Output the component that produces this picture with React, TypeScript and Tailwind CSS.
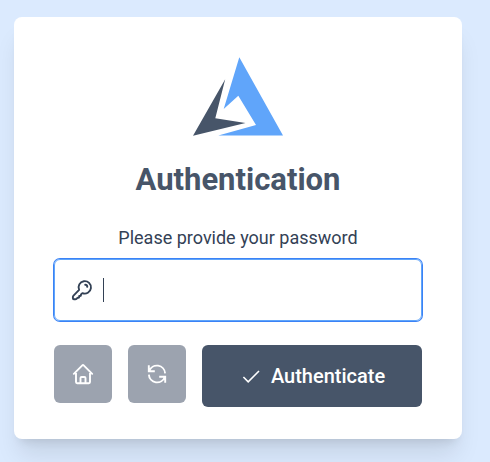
import { useState } from 'react';
import type { ReactNode } from 'react';

function Logo() {
  return (
    <svg width="90" height="80" viewBox="0 0 90 80" aria-hidden="true">
      <path fill="#60a5fa" d="M46.3 0.3 90 78.5H25.3L63 68 45.3 38.7 30.7 52Z" />
      <path fill="#475569" d="M32.2 22.3 22.3 61.2 52.5 66 0 78.7Z" />
    </svg>
  );
}

function Icon({ children }: { children: ReactNode }) {
  return (
    <svg
      width="24"
      height="24"
      viewBox="0 0 24 24"
      fill="none"
      stroke="currentColor"
      strokeWidth="1.9"
      aria-hidden="true"
      className="shrink-0"
    >
      {children}
    </svg>
  );
}

function KeyIcon() {
  return (
    <Icon>
      <path
        strokeLinejoin="round"
        d="M9.1 11.9A6.2 6.2 0 1 1 12.4 15.1L11 16.4V17.1Q11 18 10.1 18H9.2V18.9Q9.2 19.7 8.4 19.7H7.7L6.7 20.7Q6.1 21.2 5.3 21.2H3.9Q2.9 21.2 2.9 20.2V19Q2.9 18.2 3.5 17.6Z"
      />
      <path strokeLinecap="round" d="M15.2 6.8A2.2 2.2 0 0 1 17.3 8.9" />
    </Icon>
  );
}

function HomeIcon() {
  return (
    <Icon>
      <path
        strokeLinecap="round"
        strokeLinejoin="round"
        d="M2.8 11.8 11.3 3.3Q12 2.6 12.7 3.3L21.2 11.8M5 9.7V20.1Q5 21.2 6.1 21.2H17.9Q19 21.2 19 20.1V9.7M9.5 21.2V16.1Q9.5 15 10.6 15H13.4Q14.5 15 14.5 16.1V21.2"
      />
    </Icon>
  );
}

function RefreshIcon() {
  return (
    <Icon>
      <path d="M3.8 3.2V9.3H9.8M4.2 9A8.2 8.2 0 0 1 20.1 11.4M20.2 20.8V14.7H14.2M19.8 15A8.2 8.2 0 0 1 3.9 12.6" />
    </Icon>
  );
}

function CheckIcon() {
  return (
    <Icon>
      <path strokeWidth="1.6" d="M4.4 13 9.2 17.8 20 7" />
    </Icon>
  );
}

const smallButton =
  'flex size-[58px] items-center justify-center rounded-md bg-[#9ca3af] text-white';

export default function App() {
  const [password, setPassword] = useState('');

  return (
    <main className="min-h-screen bg-[#dbeafe] pt-[17px] pr-7 pb-[23px] pl-3.5 font-['Roboto',sans-serif]">
      <form
        className="mx-auto flex max-w-md flex-col rounded-lg bg-white px-10 pt-10 pb-8 shadow-xl"
        onSubmit={(event) => event.preventDefault()}
      >
        <div className="flex justify-center">
          <Logo />
        </div>
        <h1 className="mt-[25px] text-center text-[31px] leading-9 font-bold text-[#475569]">
          Authentication
        </h1>
        <label htmlFor="password" className="mt-[26px] text-center text-lg text-[#334155]">
          Please provide your password
        </label>
        <div className="relative mt-[7px] flex h-[62px] items-center gap-2 rounded-md border border-[#60a5fa] px-[15px] text-[#334155] ring-1 ring-[#3b82f6]">
          <KeyIcon />
          {password === '' && (
            <span aria-hidden="true" className="absolute left-12 h-6 w-px bg-[#334155]" />
          )}
          <input
            id="password"
            type="password"
            autoFocus
            value={password}
            onChange={(event) => setPassword(event.target.value)}
            className={
              'h-full min-w-0 flex-1 bg-transparent text-lg outline-none ' +
              (password === '' ? 'caret-transparent' : 'caret-[#334155]')
            }
          />
        </div>
        <div className="mt-6 flex items-start gap-4">
          <button type="button" aria-label="Home" className={smallButton}>
            <HomeIcon />
          </button>
          <button type="button" aria-label="Refresh" className={smallButton}>
            <RefreshIcon />
          </button>
          <button
            type="submit"
            className="flex h-[62px] flex-1 items-center justify-center gap-2 rounded-md bg-[#475569] text-xl font-medium text-white"
          >
            <CheckIcon />
            Authenticate
          </button>
        </div>
      </form>
    </main>
  );
}
